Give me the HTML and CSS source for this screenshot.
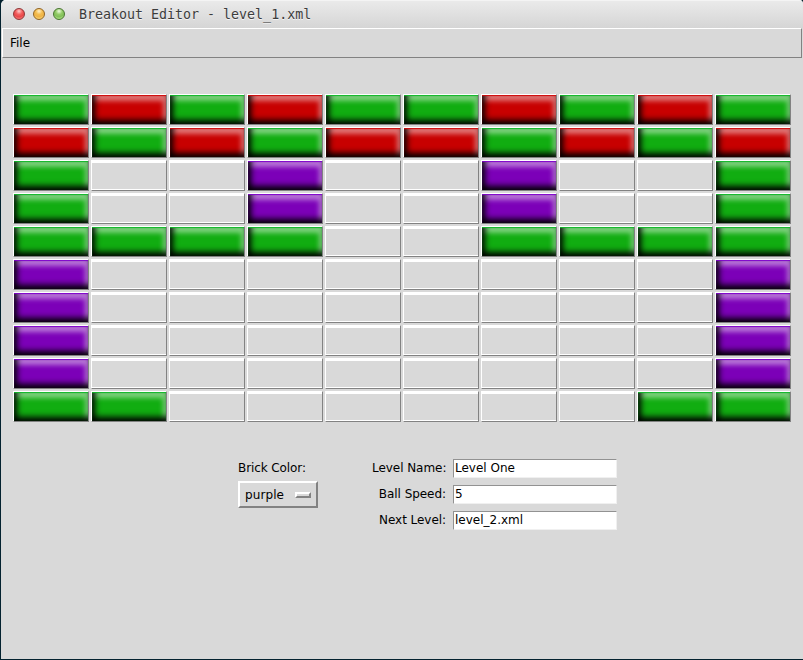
FILE: index.html
```html
<!DOCTYPE html>
<html lang="en">
<head>
<meta charset="utf-8">
<title>Breakout Editor - level_1.xml</title>
<link rel="stylesheet" href="styles.css">
</head>
<body>
<div class="window">
  <header class="titlebar">
    <span class="light close"></span><span class="light minimize"></span><span class="light maximize"></span>
    <span class="title">Breakout Editor - level_1.xml</span>
  </header>
  <nav class="menubar"><span>File</span></nav>
  <main class="grid" id="grid"></main>
  <section class="controls">
    <div class="color">
      <div class="label">Brick Color:</div>
      <button class="option"><span>purple</span><i class="indicator"></i></button>
    </div>
    <form class="fields">
      <label>Level Name:</label><input type="text" value="Level One">
      <label>Ball Speed:</label><input type="text" value="5">
      <label>Next Level:</label><input type="text" value="level_2.xml">
    </form>
  </section>
</div>
<script src="grid.js"></script>
</body>
</html>
```
FILE: styles.css
```css
* { box-sizing: border-box; }
body { margin: 0; background: #04222f; font: 12px/16px "DejaVu Sans", sans-serif; color: #000; overflow: hidden; }
.window { width: 802px; height: 659px; margin-left: 1px; background: #d9d9d9; border-radius: 5px 4px 0 0; overflow: hidden; }
.titlebar { height: 28px; display: flex; align-items: center; padding-left: 12px; background: linear-gradient(#ebebeb, #d5d5d5); box-shadow: inset 0 1px #f4f4f4; }
.light { width: 12px; height: 12px; border-radius: 50%; margin-right: 8px; border: 1px solid; }
.close { background: radial-gradient(circle at 50% 22%, #fcc 0, #f2605f 35%, #e9474a 60%, #ff9a95 100%); border-color: #8e3535; }
.minimize { background: radial-gradient(circle at 50% 22%, #fff0c8 0, #f4bd4f 35%, #efb346 60%, #ffec93 100%); border-color: #916321; }
.maximize { background: radial-gradient(circle at 50% 22%, #effbe0 0, #93cc68 35%, #82c05a 60%, #ccf8a0 100%); border-color: #47742f; }
.title { margin-left: 6px; padding-top: 2px; font: 13.3px/16px "DejaVu Sans Mono", monospace; color: #3c3c3c; text-shadow: 0 1px #f4f4f4; white-space: pre; }
.menubar { height: 30px; width: 800px; margin-left: 1px; border: 1px solid; border-color: #fff #828282 #828282 #fff; padding: 6px 0 0 7px; }
.grid { display: grid; grid-template-columns: repeat(10, 76px); grid-auto-rows: 31px; gap: 2px; margin: 36px 0 0 12px; }
.cell { border: 1px solid; border-color: #fff #828282 #828282 #fff; }
.empty { box-shadow: inset 0 2px #fff, inset 0 -1px #fff; }
.brick {
  background: var(--color);
  box-shadow:
    inset 0 1px 1px var(--edge),
    inset 3px -4px 6px #000,
    inset -3px 6px 5px rgba(255, 255, 255, .46);
}
.green { --color: #11ad11; --edge: #0fb828; }
.red { --color: #c80000; --edge: #d00808; }
.purple { --color: #7c00b8; --edge: #8000cc; }
.controls { display: flex; padding: 37px 0 0 237px; }
.color { width: 134px; }
.label { height: 22px; padding-top: 1px; letter-spacing: -.09px; }
.option { display: flex; align-items: center; width: 80px; height: 27px; padding: 0 5px; justify-content: space-between; background: #d9d9d9; border: 2px solid; border-color: #fff #828282 #828282 #fff; font: inherit; letter-spacing: .1px; color: #000; }
.indicator { width: 16px; height: 6px; border: 2px solid; border-color: #fff #828282 #828282 #fff; }
.fields { display: grid; grid-template-columns: 74px 164px; grid-auto-rows: 19px; gap: 7px; margin: 0; }
.fields label { text-align: right; padding-top: 1px; white-space: nowrap; letter-spacing: -.05px; }
.fields input { width: 164px; height: 19px; background: #fff; border: 1px solid; border-color: #929292 #f0f0f0 #f0f0f0 #929292; padding: 0 1px 1px; font: inherit; color: #000; border-radius: 0; }
```
FILE: grid.js
```js
const colors = { g: 'green', r: 'red', p: 'purple' };
const level = [
  'grgrggrgrg',
  'rgrgrrgrgr',
  'g..p..p..g',
  'g..p..p..g',
  'gggg..gggg',
  'p........p',
  'p........p',
  'p........p',
  'p........p',
  'gg......gg'
];
const grid = document.getElementById('grid');
for (const key of level.join('')) {
  const cell = document.createElement('div');
  cell.className = colors[key] ? 'cell brick ' + colors[key] : 'cell empty';
  grid.append(cell);
}
```
